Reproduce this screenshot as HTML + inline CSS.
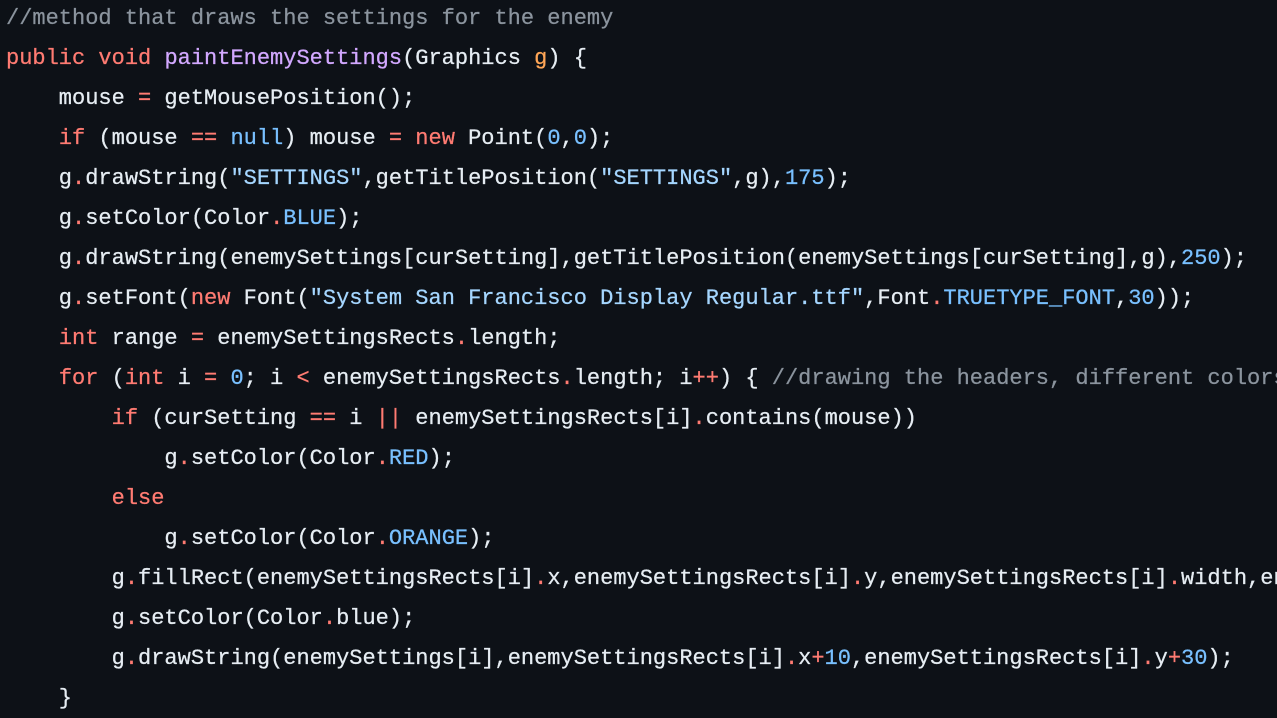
<!DOCTYPE html>
<html><head><style>
html,body{margin:0;padding:0;background:#0d1117;width:1277px;height:718px;overflow:hidden}
pre{margin:0;padding:0 0 0 6px;width:1271px;overflow:hidden;font-family:"Liberation Mono",monospace;font-size:22px;line-height:40px;color:#e6edf3;white-space:pre;position:relative;top:-1px;-webkit-text-stroke:0.25px currentColor}
.c{color:#8b949e}.k{color:#ff7b72}.f{color:#d2a8ff}.s{color:#a5d6ff}.n{color:#79c0ff}.p{color:#ffa657}
</style></head><body><pre><span class="c">//method that draws the settings for the enemy</span>
<span class="k">public</span> <span class="k">void</span> <span class="f">paintEnemySettings</span>(Graphics <span class="p">g</span>) {
    mouse <span class="k">=</span> getMousePosition();
    <span class="k">if</span> (mouse <span class="k">==</span> <span class="n">null</span>) mouse <span class="k">=</span> <span class="k">new</span> Point(<span class="n">0</span>,<span class="n">0</span>);
    g<span class="k">.</span>drawString(<span class="s">"SETTINGS"</span>,getTitlePosition(<span class="s">"SETTINGS"</span>,g),<span class="n">175</span>);
    g<span class="k">.</span>setColor(Color<span class="k">.</span><span class="n">BLUE</span>);
    g<span class="k">.</span>drawString(enemySettings[curSetting],getTitlePosition(enemySettings[curSetting],g),<span class="n">250</span>);
    g<span class="k">.</span>setFont(<span class="k">new</span> Font(<span class="s">"System San Francisco Display Regular.ttf"</span>,Font<span class="k">.</span><span class="n">TRUETYPE_FONT</span>,<span class="n">30</span>));
    <span class="k">int</span> range <span class="k">=</span> enemySettingsRects<span class="k">.</span>length;
    <span class="k">for</span> (<span class="k">int</span> i <span class="k">=</span> <span class="n">0</span>; i <span class="k">&lt;</span> enemySettingsRects<span class="k">.</span>length; i<span class="k">++</span>) { <span class="c">//drawing the headers, different colors</span>
        <span class="k">if</span> (curSetting <span class="k">==</span> i <span class="k">||</span> enemySettingsRects[i]<span class="k">.</span>contains(mouse))
            g<span class="k">.</span>setColor(Color<span class="k">.</span><span class="n">RED</span>);
        <span class="k">else</span>
            g<span class="k">.</span>setColor(Color<span class="k">.</span><span class="n">ORANGE</span>);
        g<span class="k">.</span>fillRect(enemySettingsRects[i]<span class="k">.</span>x,enemySettingsRects[i]<span class="k">.</span>y,enemySettingsRects[i]<span class="k">.</span>width,enemySettingsRects[i]<span class="k">.</span>height);
        g<span class="k">.</span>setColor(Color<span class="k">.</span>blue);
        g<span class="k">.</span>drawString(enemySettings[i],enemySettingsRects[i]<span class="k">.</span>x<span class="k">+</span><span class="n">10</span>,enemySettingsRects[i]<span class="k">.</span>y<span class="k">+</span><span class="n">30</span>);
    }
</pre></body></html>
